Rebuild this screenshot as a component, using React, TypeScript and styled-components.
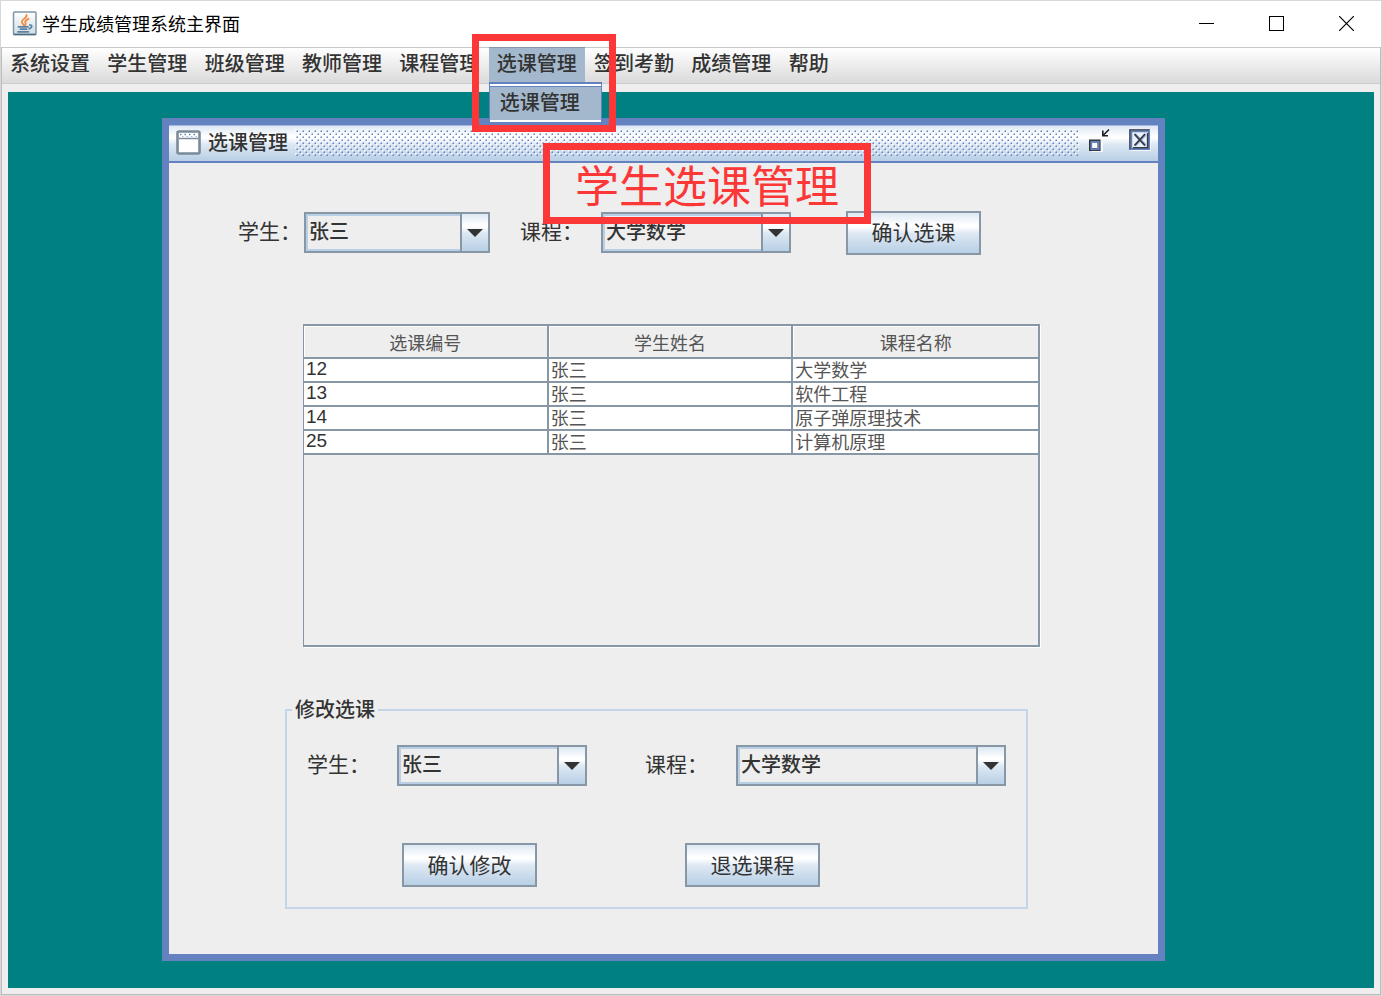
import React, { useState } from "react";
import styled, { createGlobalStyle, css } from "styled-components";

const SANS = `"Noto Sans CJK SC", "Noto Sans", sans-serif`;

const color = {
  panel: "#eeeeee",
  desktop: "#008080",
  frame: "#6382bf",
  frameLight: "#a3b8e0",
  line: "#8797a6",
  selected: "#a3b8cc",
  soft: "#b8cfe5",
  text: "#333333",
  mark: "#fc3737",
};

const steelGradient = `linear-gradient(180deg, #dde8f3 0%, #ffffff 30%, #ffffff 34%, #dde8f3 52%, #b8cfe5 100%)`;

const GlobalStyle = createGlobalStyle`
  *, *::before, *::after { box-sizing: border-box; }
  body { margin: 0; background: #d8d8d8; font-family: ${SANS}; color: ${color.text}; }
  button, select { font-family: inherit; color: inherit; margin: 0; }
`;

const Shell = styled.div`
  position: relative;
  min-height: 100vh;
  padding: 1px;
  display: flex;
  flex-direction: column;
  background: #d8d8d8;
`;

const AppWindow = styled.div`
  flex: 1;
  display: flex;
  flex-direction: column;
  background: ${color.panel};
  border: 1px solid #bcbcbc;
  border-top: 0;
`;

const TitleBar = styled.header`
  display: flex;
  align-items: center;
  height: 46px;
  margin: 0 -1px;
  padding: 0 0 2px 11px;
  background: #ffffff;
`;

const WindowTitle = styled.h1`
  flex: 1;
  margin: 0 0 0 5px;
  font-size: 18px;
  line-height: 24px;
  font-weight: 400;
  color: #000000;
`;

const CaptionButton = styled.button`
  display: flex;
  align-items: center;
  justify-content: center;
  width: 70px;
  height: 44px;
  padding: 0;
  border: 0;
  background: transparent;
`;

const MenuBar = styled.nav`
  display: flex;
  height: 37px;
  border-top: 1px solid #c8c8c8;
  border-bottom: 1px solid #cccccc;
  background: linear-gradient(180deg, #ffffff 0%, #dadada 100%);
`;

const MenuList = styled.ul`
  display: grid;
  grid-template-columns: repeat(9, 1fr);
  width: 876px;
  margin: 0;
  padding: 0;
  list-style: none;
`;

const MenuEntry = styled.li`
  position: relative;
`;

const MenuButton = styled.button<{ $active?: boolean }>`
  height: 35px;
  padding: 0 8px 6px;
  border: 0;
  background: transparent;
  font-size: 20px;
  line-height: 24px;
  font-weight: 500;
  white-space: nowrap;
  ${(p) =>
    p.$active &&
    css`
      background: ${color.selected};
      box-shadow: 0 -1px 0 ${color.line};
    `}
`;

const Popup = styled.div`
  position: absolute;
  z-index: 2;
  top: 34px;
  left: 0;
  width: 113px;
  padding: 2px 0;
  border: 1px solid ${color.frame};
  border-top-width: 2px;
  background: #ffffff;
`;

const PopupItem = styled.button`
  display: block;
  width: 100%;
  height: 34px;
  padding: 0 10px 4px;
  border: 0;
  border-top: 1px solid ${color.frame};
  background: ${color.selected};
  font-size: 20px;
  line-height: 24px;
  font-weight: 500;
  text-align: left;
  white-space: nowrap;
`;

const MenuMark = styled.div`
  position: absolute;
  z-index: 3;
  top: -14px;
  left: -17px;
  width: 144px;
  height: 98px;
  border: 7px solid ${color.mark};
  pointer-events: none;
`;

const TitleMark = styled.div`
  position: absolute;
  z-index: 3;
  top: 18px;
  left: 374px;
  display: flex;
  align-items: center;
  justify-content: center;
  width: 328px;
  height: 81px;
  border: 7px solid ${color.mark};
  color: ${color.mark};
  font-size: 44px;
  line-height: 60px;
  white-space: nowrap;
  pointer-events: none;
`;

const Desktop = styled.main`
  flex: 1;
  margin: 8px 6px 6px;
  padding: 26px 209px 27px 154px;
  background: ${color.desktop};
  display: flex;
  flex-direction: column;
`;

const Frame = styled.section`
  position: relative;
  flex: 1;
  display: flex;
  flex-direction: column;
  border: 7px solid ${color.frame};
  background: ${color.panel};
`;

const FrameBar = styled.div`
  display: flex;
  align-items: center;
  height: 38px;
  padding: 0 7px 3px;
  border-top: 1px solid ${color.frameLight};
  border-bottom: 2px solid ${color.frame};
  background: ${steelGradient};
`;

const FrameTitle = styled.h2`
  margin: 0 7px 0 7px;
  font-size: 20px;
  line-height: 24px;
  font-weight: 500;
`;

const Bumps = styled.svg`
  flex: 1;
  min-width: 0;
  height: 27px;
`;

const FrameButton = styled.button`
  display: flex;
  padding: 0 0 4px;
  border: 0;
  background: transparent;
  margin-left: 9px;
  & + & {
    margin-left: 17px;
  }
`;

const Content = styled.div`
  flex: 1;
  display: flex;
  flex-direction: column;
  padding: 48px 118px 45px 116px;
`;

const SelectRow = styled.form`
  display: flex;
  align-items: center;
  height: 43px;
  margin-left: -47px;
`;

const EditRow = styled.div`
  display: flex;
  align-items: center;
  padding-left: 20px;
`;

const Label = styled.label<{ $gap: number; $lead?: number }>`
  margin-left: ${(p) => p.$lead ?? 0}px;
  margin-right: ${(p) => p.$gap}px;
  width: 63px;
  padding-bottom: 6px;
  font-size: 21px;
  line-height: 28px;
  white-space: nowrap;
`;

const ComboBox = styled.div<{ $width: number }>`
  position: relative;
  width: ${(p) => p.$width}px;
  height: 41px;
`;

const ComboSelect = styled.select`
  appearance: none;
  width: 100%;
  height: 100%;
  padding: 0 32px 4px 3px;
  border: 2px solid ${color.line};
  border-radius: 0;
  background: ${color.panel};
  box-shadow: inset 0 0 0 2px ${color.soft};
  font-size: 20px;
  line-height: 24px;
  font-weight: 500;
`;

const ComboArrow = styled.span`
  position: absolute;
  top: 2px;
  right: 2px;
  bottom: 2px;
  width: 28px;
  display: flex;
  align-items: center;
  justify-content: center;
  border-left: 2px solid ${color.line};
  background: ${steelGradient};
  pointer-events: none;
`;

const PushButton = styled.button<{ $lead: number }>`
  width: 135px;
  height: 44px;
  margin-left: ${(p) => p.$lead}px;
  padding: 0 0 3px;
  border: 2px solid ${color.line};
  background: ${steelGradient};
  font-size: 21px;
  line-height: 28px;
`;

const ScrollPane = styled.div`
  height: 323px;
  margin: 70px 0 0 18px;
  border: 2px solid ${color.line};
  border-left-width: 1px;
  box-shadow: 1px 1px 0 #ffffff;
`;

const Table = styled.table`
  width: 100%;
  border-collapse: separate;
  border-spacing: 0;
  table-layout: fixed;
  font-size: 18px;
  color: #555555;
  background: #ffffff;
`;

const HeadCell = styled.th`
  height: 33px;
  padding: 0;
  border-right: 2px solid ${color.line};
  border-bottom: 2px solid ${color.line};
  background: ${color.panel};
  box-shadow: inset 1px 1px 0 #ffffff;
  line-height: 24px;
  font-weight: 400;
  &:last-child {
    border-right: 0;
  }
`;

const Cell = styled.td`
  height: 24px;
  padding: 0 2px 2px;
  border-right: 2px solid ${color.line};
  border-bottom: 2px solid ${color.line};
  line-height: 20px;
  white-space: nowrap;
  &:first-child {
    font-family: "Liberation Sans", sans-serif;
    font-size: 19px;
    color: ${color.text};
  }
  &:last-child {
    border-right: 0;
  }
`;

const EditGroup = styled.fieldset`
  min-width: 0;
  margin: 50px 12px 0 0;
  padding: 22px 0 20px;
  border: 2px solid #c3d6e8;
`;

const Legend = styled.legend`
  margin-left: 5px;
  padding: 0 3px 2px;
  font-size: 20px;
  line-height: 24px;
  font-weight: 500;
`;

const EditActions = styled.div`
  display: flex;
  margin-top: 57px;
`;

const courses = ["大学数学", "软件工程", "原子弹原理技术", "计算机原理"];

const records = [
  { id: 12, student: "张三", course: courses[0] },
  { id: 13, student: "张三", course: courses[1] },
  { id: 14, student: "张三", course: courses[2] },
  { id: 25, student: "张三", course: courses[3] },
];

const menus = ["系统设置", "学生管理", "班级管理", "教师管理", "课程管理", "选课管理", "签到考勤", "成绩管理", "帮助"];

function JavaIcon() {
  return (
    <svg width="25" height="25" viewBox="0 0 25 25" aria-hidden="true">
      <defs>
        <linearGradient id="tile" x1="0" y1="0" x2="0" y2="1">
          <stop offset="0" stopColor="#ffffff" />
          <stop offset="1" stopColor="#cfdbe4" />
        </linearGradient>
      </defs>
      <rect x="1.5" y="1" width="22.500" height="22.500" rx="1" fill="url(#tile)" stroke="#7f97a6" strokeWidth="1.500" />
      <path d="M1.500 23.500H24" stroke="#4b6c82" strokeWidth="1.500" />
      <path d="M14.500 4C15.500 7 9.500 8 9.800 11c.2 1.500 1.800 2 2 3.500M16.500 7.800c-2 .8-3.600 1.700-3.200 3.300.3 1.200.9 2-.3 3.300" fill="none" stroke="#ef8a3c" strokeWidth="1.800" strokeLinecap="round" />
      <path d="M6.500 15.800H16M8.500 18.200h6M6 20.800h10.500" fill="none" stroke="#5d82a1" strokeWidth="1.800" strokeLinecap="round" />
      <path d="M17 14c4-.5 3.500 3-.5 4" fill="none" stroke="#5d82a1" strokeWidth="1.600" />
    </svg>
  );
}

function Combo({ id, width, value, options }: { id: string; width: number; value: string; options: string[] }) {
  const [current, setCurrent] = useState(value);
  return (
    <ComboBox $width={width}>
      <ComboSelect id={id} value={current} onChange={(e) => setCurrent(e.target.value)}>
        {options.map((o) => (
          <option key={o}>{o}</option>
        ))}
      </ComboSelect>
      <ComboArrow>
        <svg width="16" height="8" viewBox="0 0 16 8" aria-hidden="true">
          <path d="M0 0H16L8 8Z" fill="#333333" />
        </svg>
      </ComboArrow>
    </ComboBox>
  );
}

export default function App() {
  return (
    <>
      <GlobalStyle />
      <Shell>
        <AppWindow>
          <TitleBar>
            <JavaIcon />
            <WindowTitle>学生成绩管理系统主界面</WindowTitle>
            <CaptionButton aria-label="最小化">
              <svg width="15" height="15" viewBox="0 0 15 15" aria-hidden="true">
                <path d="M0 7.500H15" stroke="#000" />
              </svg>
            </CaptionButton>
            <CaptionButton aria-label="最大化">
              <svg width="15" height="15" viewBox="0 0 15 15" aria-hidden="true">
                <rect x=".5" y=".5" width="14" height="14" fill="none" stroke="#000" />
              </svg>
            </CaptionButton>
            <CaptionButton aria-label="关闭">
              <svg width="15" height="15" viewBox="0 0 15 15" aria-hidden="true">
                <path d="M0 0L15 15M15 0L0 15" stroke="#000" strokeWidth="1.200" />
              </svg>
            </CaptionButton>
          </TitleBar>

          <MenuBar>
            <MenuList>
              {menus.map((m, i) => (
                <MenuEntry key={m}>
                  <MenuButton $active={i === 5}>{m}</MenuButton>
                  {i === 5 && (
                    <>
                      <Popup>
                        <PopupItem>选课管理</PopupItem>
                      </Popup>
                      <MenuMark />
                    </>
                  )}
                </MenuEntry>
              ))}
            </MenuList>
          </MenuBar>

          <Desktop>
            <Frame>
              <FrameBar>
                <svg width="25" height="25" viewBox="0 0 25 25" aria-hidden="true">
                  <rect x="1.500" y="1.500" width="22" height="22" rx="1.500" fill="#fff" stroke="#7a8a99" strokeWidth="2.600" />
                  <path d="M3 8.500H22" stroke="#7a8a99" strokeWidth="1.500" />
                  <path d="M4 4.500H21" stroke="#6382bf" strokeWidth="1.300" strokeDasharray="1.500 3" />
                  <path d="M6 6.500H21" stroke="#a3b8e0" strokeWidth="1.200" strokeDasharray="1.500 3" />
                </svg>
                <FrameTitle>选课管理</FrameTitle>
                <Bumps aria-hidden="true">
                  <defs>
                    <pattern id="bumps" width="6" height="6" patternUnits="userSpaceOnUse">
                      <path d="M0 0h1.500v1.500H0zM3 3h1.500v1.500H3z" fill="#ffffff" />
                      <path d="M1.500 1.500H3V3H1.500zM4.500 4.500H6V6H4.500z" fill="#6382bf" />
                    </pattern>
                  </defs>
                  <rect width="100%" height="27" fill="url(#bumps)" />
                </Bumps>
                <FrameButton aria-label="还原窗口">
                  <svg width="24" height="24" viewBox="0 0 24 24" aria-hidden="true">
                    <path d="M3.500 24H14V13.500" fill="none" stroke="#fff" strokeWidth="1.500" />
                    <rect x="2.500" y="13" width="8.500" height="8.500" fill="#fff" stroke="#333" strokeWidth="3" />
                    <rect x="3.300" y="13.800" width="7.400" height="7.400" fill="none" stroke="#6382bf" strokeWidth="1.800" />
                    <path d="M21 1.500L15.500 7M14.800 2.500V7.700H20" fill="none" stroke="#222" strokeWidth="1.600" />
                  </svg>
                </FrameButton>
                <FrameButton aria-label="关闭窗口">
                  <svg width="22" height="22" viewBox="0 0 22 22" aria-hidden="true">
                    <rect x="2" y="2" width="19" height="19" fill="none" stroke="#fff" strokeWidth="1.500" />
                    <rect x="1" y="1" width="19" height="19" fill="#eaf1f9" stroke="#333a4a" strokeWidth="1.600" />
                    <path d="M2.500 20V2.500H20M20.300 1V20.300H1" fill="none" stroke="#6382bf" strokeWidth="1.500" />
                    <path d="M4 18.700H18.500V4" fill="none" stroke="#333a4a" strokeWidth="1.300" />
                    <path d="M6 5.500L16.500 16.500M16.500 5.500L6 16.500" stroke="#8fa6d4" strokeWidth="2.600" />
                    <path d="M5.500 5L16 16.500M16 5L5.500 16.500" stroke="#333" strokeWidth="1.500" />
                  </svg>
                </FrameButton>
              </FrameBar>

              <TitleMark>学生选课管理</TitleMark>

              <Content>
                <SelectRow onSubmit={(e) => e.preventDefault()}>
                  <Label htmlFor="student" $gap={3}>学生：</Label>
                  <Combo id="student" width={186} value="张三" options={["张三"]} />
                  <Label htmlFor="course" $lead={30} $gap={18}>课程：</Label>
                  <Combo id="course" width={190} value={courses[0]} options={courses} />
                  <PushButton $lead={55}>确认选课</PushButton>
                </SelectRow>

                <ScrollPane>
                  <Table>
                    <thead>
                      <tr>
                        <HeadCell scope="col">选课编号</HeadCell>
                        <HeadCell scope="col">学生姓名</HeadCell>
                        <HeadCell scope="col">课程名称</HeadCell>
                      </tr>
                    </thead>
                    <tbody>
                      {records.map((r) => (
                        <tr key={r.id}>
                          <Cell>{r.id}</Cell>
                          <Cell>{r.student}</Cell>
                          <Cell>{r.course}</Cell>
                        </tr>
                      ))}
                    </tbody>
                  </Table>
                </ScrollPane>

                <EditGroup>
                  <Legend>修改选课</Legend>
                  <EditRow>
                    <Label htmlFor="edit-student" $gap={27}>学生：</Label>
                    <Combo id="edit-student" width={190} value="张三" options={["张三"]} />
                    <Label htmlFor="edit-course" $lead={58} $gap={28}>课程：</Label>
                    <Combo id="edit-course" width={270} value={courses[0]} options={courses} />
                  </EditRow>
                  <EditActions>
                    <PushButton type="button" $lead={115}>确认修改</PushButton>
                    <PushButton type="button" $lead={148}>退选课程</PushButton>
                  </EditActions>
                </EditGroup>
              </Content>
            </Frame>
          </Desktop>
        </AppWindow>
      </Shell>
    </>
  );
}
